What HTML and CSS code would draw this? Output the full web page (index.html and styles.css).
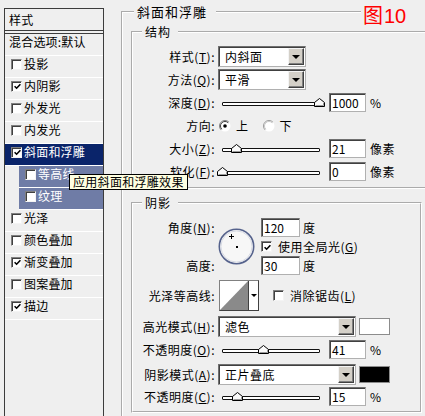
FILE: index.html
```html
<!DOCTYPE html>
<html lang="zh-CN">
<head>
<meta charset="utf-8">
<title>图层样式 - 斜面和浮雕</title>
<link rel="stylesheet" href="styles.css">
</head>
<body>
<div class="dialog">
  <div class="styles-panel">
    <div class="panel-head">样式</div>
    <div class="row blend">混合选项:默认</div>
    <div class="row"><span class="cb"></span>投影</div>
    <div class="row"><span class="cb"><svg class="check" width="7" height="7" viewBox="0 0 7 7"><path d="M0.6 3.2L2.6 5.2L6.4 1.2" fill="none" stroke="#000" stroke-width="1.6"/></svg></span>内阴影</div>
    <div class="row"><span class="cb"></span>外发光</div>
    <div class="row"><span class="cb"></span>内发光</div>
    <div class="row selected"><span class="cb"><svg class="check" width="7" height="7" viewBox="0 0 7 7"><path d="M0.6 3.2L2.6 5.2L6.4 1.2" fill="none" stroke="#000" stroke-width="1.6"/></svg></span>斜面和浮雕</div>
    <div class="row sub"><span class="cb"></span>等高线</div>
    <div class="row sub"><span class="cb"></span>纹理</div>
    <div class="row"><span class="cb"></span>光泽</div>
    <div class="row"><span class="cb"></span>颜色叠加</div>
    <div class="row"><span class="cb"><svg class="check" width="7" height="7" viewBox="0 0 7 7"><path d="M0.6 3.2L2.6 5.2L6.4 1.2" fill="none" stroke="#000" stroke-width="1.6"/></svg></span>渐变叠加</div>
    <div class="row"><span class="cb"></span>图案叠加</div>
    <div class="row"><span class="cb"><svg class="check" width="7" height="7" viewBox="0 0 7 7"><path d="M0.6 3.2L2.6 5.2L6.4 1.2" fill="none" stroke="#000" stroke-width="1.6"/></svg></span>描边</div>
  </div>

  <div class="main">
    <fieldset class="group outer">
      <legend>斜面和浮雕</legend>

      <fieldset class="group struct">
        <legend>结构</legend>
        <div class="frow r-sel">
          <span class="lbl">样式(<u>T</u>):</span>
          <div class="select w-s"><span class="val">内斜面</span><span class="btn"><i class="arrow"></i></span></div>
        </div>
        <div class="frow r-sel r-sel2">
          <span class="lbl">方法(<u>Q</u>):</span>
          <div class="select w-s"><span class="val">平滑</span><span class="btn"><i class="arrow"></i></span></div>
        </div>
        <div class="frow r-num r-first">
          <span class="lbl">深度(<u>D</u>):</span>
          <div class="slider"><div class="track"></div><svg class="thumb" style="left:96px" width="11" height="9" viewBox="0 0 11 9"><path d="M0.5 8.5V4.5L5.5 0.5L10.5 4.5V8.5Z" fill="#fafafa" stroke="#000"/><path d="M9.5 4.9V7.5H1.5" fill="none" stroke="#9a9a9a"/></svg></div>
          <div class="num">1000</div><span class="unit">%</span>
        </div>
        <div class="frow r-num">
          <span class="lbl">方向:</span>
          <div class="radios">
            <svg class="radio" width="12" height="12" viewBox="0 0 12 12"><circle cx="6" cy="6" r="5.5" fill="#fff"/><path d="M2.1 9.9A5.5 5.5 0 0 1 9.9 2.1" fill="none" stroke="#808080"/><path d="M2.8 9.2A4.5 4.5 0 0 1 9.2 2.8" fill="none" stroke="#404040"/><circle cx="6" cy="6" r="1.8" fill="#000"/></svg>
            <span class="rtext">上</span>
            <svg class="radio second" width="12" height="12" viewBox="0 0 12 12"><circle cx="6" cy="6" r="5.5" fill="#fff"/><path d="M2.1 9.9A5.5 5.5 0 0 1 9.9 2.1" fill="none" stroke="#9a9a9a"/><path d="M2.8 9.2A4.5 4.5 0 0 1 9.2 2.8" fill="none" stroke="#c8c8c8"/></svg>
            <span class="rtext">下</span>
          </div>
        </div>
        <div class="frow r-num">
          <span class="lbl">大小(<u>Z</u>):</span>
          <div class="slider"><div class="track"></div><svg class="thumb" style="left:13px" width="11" height="9" viewBox="0 0 11 9"><path d="M0.5 8.5V4.5L5.5 0.5L10.5 4.5V8.5Z" fill="#fafafa" stroke="#000"/><path d="M9.5 4.9V7.5H1.5" fill="none" stroke="#9a9a9a"/></svg></div>
          <div class="num">21</div><span class="unit">像素</span>
        </div>
        <div class="frow r-num">
          <span class="lbl">软化(<u>F</u>):</span>
          <div class="slider"><div class="track"></div><svg class="thumb" style="left:-1px" width="11" height="9" viewBox="0 0 11 9"><path d="M0.5 8.5V4.5L5.5 0.5L10.5 4.5V8.5Z" fill="#fafafa" stroke="#000"/><path d="M9.5 4.9V7.5H1.5" fill="none" stroke="#9a9a9a"/></svg></div>
          <div class="num">0</div><span class="unit">像素</span>
        </div>
      </fieldset>

      <fieldset class="group shade">
        <legend>阴影</legend>
        <div class="angle-block">
          <span class="lbl a-lbl1">角度(<u>N</u>):</span>
          <svg class="angle" width="37" height="37" viewBox="0 0 37 37">
            <circle cx="18.5" cy="18.5" r="17.2" fill="#f7f7f7" stroke="#55628c" stroke-width="1.6"/>
            <circle cx="18.5" cy="18.5" r="15.6" fill="none" stroke="#d6d9e3" stroke-width="1"/>
            <path d="M11 8.5h5M13.5 6v5" stroke="#000" stroke-width="1"/>
            <rect x="18" y="18" width="2" height="2" fill="#000"/>
          </svg>
          <div class="a-r1"><div class="num w39">120</div><span class="unit u-deg">度</span></div>
          <div class="a-r2"><span class="cb gap"><svg class="check" width="7" height="7" viewBox="0 0 7 7"><path d="M0.6 3.2L2.6 5.2L6.4 1.2" fill="none" stroke="#000" stroke-width="1.6"/></svg></span>使用全局光(<u>G</u>)</div>
          <span class="lbl a-lbl3">高度:</span>
          <div class="a-r3"><div class="num w39">30</div><span class="unit u-deg">度</span></div>
        </div>
        <div class="frow r-contour">
          <span class="lbl">光泽等高线:</span>
          <div class="contour">
            <div class="preview"><svg width="28" height="29" viewBox="0 0 28 29"><polygon points="0,29 28,0 28,29" fill="#8a8a8a"/></svg></div>
            <div class="cbtn"><i class="arrow small"></i></div>
          </div>
          <span class="cb gap aa"></span><span>消除锯齿(<u>L</u>)</span>
        </div>
        <div class="frow r-sel r-hl">
          <span class="lbl">高光模式(<u>H</u>):</span>
          <div class="select w-l"><span class="val">滤色</span><span class="btn"><i class="arrow"></i></span></div>
          <span class="swatch white"></span>
        </div>
        <div class="frow r-num r-op1">
          <span class="lbl">不透明度(<u>O</u>):</span>
          <div class="slider"><div class="track"></div><svg class="thumb" style="left:40px" width="11" height="9" viewBox="0 0 11 9"><path d="M0.5 8.5V4.5L5.5 0.5L10.5 4.5V8.5Z" fill="#fafafa" stroke="#000"/><path d="M9.5 4.9V7.5H1.5" fill="none" stroke="#9a9a9a"/></svg></div>
          <div class="num">41</div><span class="unit">%</span>
        </div>
        <div class="frow r-sel r-sh">
          <span class="lbl">阴影模式(<u>A</u>):</span>
          <div class="select w-l"><span class="val">正片叠底</span><span class="btn"><i class="arrow"></i></span></div>
          <span class="swatch black"></span>
        </div>
        <div class="frow r-num r-op2">
          <span class="lbl">不透明度(<u>C</u>):</span>
          <div class="slider"><div class="track"></div><svg class="thumb" style="left:14px" width="11" height="9" viewBox="0 0 11 9"><path d="M0.5 8.5V4.5L5.5 0.5L10.5 4.5V8.5Z" fill="#fafafa" stroke="#000"/><path d="M9.5 4.9V7.5H1.5" fill="none" stroke="#9a9a9a"/></svg></div>
          <div class="num">15</div><span class="unit">%</span>
        </div>
      </fieldset>
    </fieldset>
  </div>

  <div class="tooltip">应用斜面和浮雕效果</div>
  <div class="fig-label"><span class="fig-cjk">图</span><span class="fig-num">10</span></div>
</div>
</body>
</html>
```
FILE: styles.css
```css
* { box-sizing: border-box; }
html, body { margin: 0; padding: 0; overflow: hidden; }
body {
  width: 425px;
  height: 416px;
  background: #efefef;
  color: #000;
  font-family: "Noto Sans CJK SC", "Noto Sans", sans-serif;
  font-size: 12px;
}
u { text-decoration: underline; text-underline-offset: 1px; }

.dialog {
  position: relative;
  display: flex;
  align-items: flex-start;
  width: 425px;
  height: 416px;
  overflow: hidden;
}

/* ---------- left style list ---------- */
.styles-panel {
  flex: none;
  margin: 8px 0 0 4px;
  width: 100px;
  height: 409px;
  border: 1px solid #3c3c3c;
  letter-spacing: 0.2px;
}
.panel-head {
  height: 25px;
  padding-left: 4px;
  line-height: 21px;
  border-bottom: 4px double #3c3c3c;
}
.row {
  display: flex;
  align-items: center;
  height: 22px;
  padding: 0 0 5px 6px;
  line-height: 16px;
  border-bottom: 1px solid #fff;
  white-space: nowrap;
}
.row.blend { padding-left: 4px; }
.row.selected { background: #0a246a; color: #fff; }
.row.sub { margin-left: 14px; background: #6f7ca6; color: #fff; }

.cb {
  flex: none;
  width: 11px;
  height: 11px;
  margin-right: 2px;
  background: #fff;
  border: 1px solid;
  border-color: #808080 #f4f4f4 #f4f4f4 #808080;
  box-shadow: inset 1px 1px 0 #404040;
  display: flex;
  align-items: center;
  justify-content: center;
}
.check { display: block; margin: 1px 0 0 1px; }
.cb.gap { margin-right: 6px; }

/* ---------- right side group boxes ---------- */
.main {
  flex: none;
  width: 304px;
  height: 416px;
  margin-left: 17px;
  overflow: hidden;
  letter-spacing: 0.5px;
}
.group {
  margin: 0;
  min-width: 0;
  border: 2px groove #fff;
  padding: 0;
}
.group > legend {
  margin-left: 9px;
  padding: 0 7px 0 3px;
  line-height: 14px;
  font-size: 12px;
  letter-spacing: 1px;
}
.outer {
  margin-top: 5px;
  width: 340px;
  padding: 6px 0 12px 8px;
}
.outer > legend {
  margin-left: 3px;
  padding: 0 9px 0 3px;
  font-size: 13px;
  letter-spacing: 1px;
}
.struct { width: 318px; padding: 7px 0 6px 0; }
.shade { width: 291px; margin-top: 7px; padding: 8px 0 5px 0; }

/* ---------- form rows ---------- */
.frow { display: flex; align-items: center; white-space: nowrap; }
.lbl {
  flex: none;
  width: 83px;
  margin-right: 2px;
  padding-right: 1px;
  text-align: right;
}
.r-sel { height: 21px; }
.r-sel2 { margin-top: 2px; }
.r-num { height: 19px; margin-top: 4px; }
.r-num.r-first { margin-top: 3px; }

.select {
  flex: none;
  display: flex;
  height: 21px;
  padding: 1px;
  background: #fff;
  border: 1px solid;
  border-color: #707070 #b0b0b0 #b0b0b0 #707070;
  box-shadow: inset 1px 1px 0 #404040;
}
.w-s { width: 88px; }
.w-l { width: 138px; }
.select .val { flex: 1; padding-left: 5px; line-height: 17px; }
.select .btn {
  flex: none;
  width: 16px;
  background: #d4d0c8;
  border: 1px solid;
  border-color: #f4f4f4 #404040 #404040 #f4f4f4;
  box-shadow: inset -1px -1px 0 #808080;
  display: flex;
  align-items: center;
  justify-content: center;
}
.arrow {
  display: block;
  width: 0;
  height: 0;
  border-left: 4px solid transparent;
  border-right: 4px solid transparent;
  border-top: 4px solid #000;
}
.arrow.small {
  border-left-width: 3px;
  border-right-width: 3px;
  border-top-width: 3px;
}

.num {
  flex: none;
  width: 37px;
  height: 19px;
  padding-left: 2px;
  line-height: 17px;
  letter-spacing: 0;
  background: #fff;
  border: 1px solid;
  border-color: #707070 #b0b0b0 #b0b0b0 #707070;
  box-shadow: inset 1px 1px 0 #404040;
}
.num.w39 { width: 39px; }
.unit { margin-left: 4px; }
.unit.u-deg { margin-left: 3px; }

.slider {
  position: relative;
  flex: none;
  width: 107px;
  height: 19px;
  margin-right: 4px;
}
.slider .track {
  margin: 9px 0 0 4px;
  width: 98px;
  height: 4px;
  background: #fff;
  border: 1px solid #111;
  border-radius: 1px;
}
.slider .thumb { position: absolute; top: 5px; display: block; }

.radios { display: flex; align-items: center; margin-left: 1px; }
.radio { display: block; flex: none; }
.radio.second { margin-left: 14px; }
.rtext { margin-left: 5px; }

/* ---------- shadow group ---------- */
.angle-block {
  display: grid;
  grid-template-columns: 85px 43px auto;
  grid-template-rows: 19px 19px 19px;
  align-items: center;
}
.a-lbl1 { grid-column: 1; grid-row: 1; }
.a-lbl3 { grid-column: 1; grid-row: 3; }
.angle { grid-column: 2; grid-row: 1 / 4; align-self: center; display: block; }
.a-r1, .a-r2, .a-r3 { grid-column: 3; display: flex; align-items: center; white-space: nowrap; }
.a-r1 { grid-row: 1; }
.a-r2 { grid-row: 2; }
.a-r3 { grid-row: 3; }

.r-contour { height: 31px; margin-top: 5px; }
.contour {
  flex: none;
  display: flex;
  width: 40px;
  height: 31px;
  margin-left: 1px;
  background: #fff;
  border: 1px solid;
  border-color: #808080 #404040 #404040 #808080;
}
.contour .preview { width: 29px; border-right: 1px solid #404040; }
.contour .preview svg { display: block; }
.contour .cbtn { flex: 1; display: flex; align-items: center; justify-content: center; }
.cb.aa { margin-left: 14px; }

.r-hl { margin-top: 5px; }
.r-op1 { margin-top: 3px; }
.r-sh { margin-top: 5px; }
.r-op2 { margin-top: 2px; }

.swatch {
  flex: none;
  width: 31px;
  height: 17px;
  margin-left: 3px;
  border: 1px solid #8c8c8c;
}
.swatch.white { background: #fff; }
.swatch.black { background: #000; }

/* ---------- overlays ---------- */
.tooltip {
  position: absolute;
  left: 69px;
  top: 174px;
  height: 16px;
  padding: 0 3px;
  line-height: 14px;
  white-space: nowrap;
  letter-spacing: 0.3px;
  background: #ffffe1;
  border: 1px solid #000;
}
.fig-label {
  position: absolute;
  left: 361px;
  top: 3px;
  width: 64px;
  height: 24px;
  padding-left: 2px;
  background: #efefef;
  color: #f00;
  line-height: 24px;
  white-space: nowrap;
}
.fig-cjk { font-size: 20px; }
.fig-num { font-family: "Liberation Sans", Arial, sans-serif; font-size: 20px; margin-left: 1px; }
```
